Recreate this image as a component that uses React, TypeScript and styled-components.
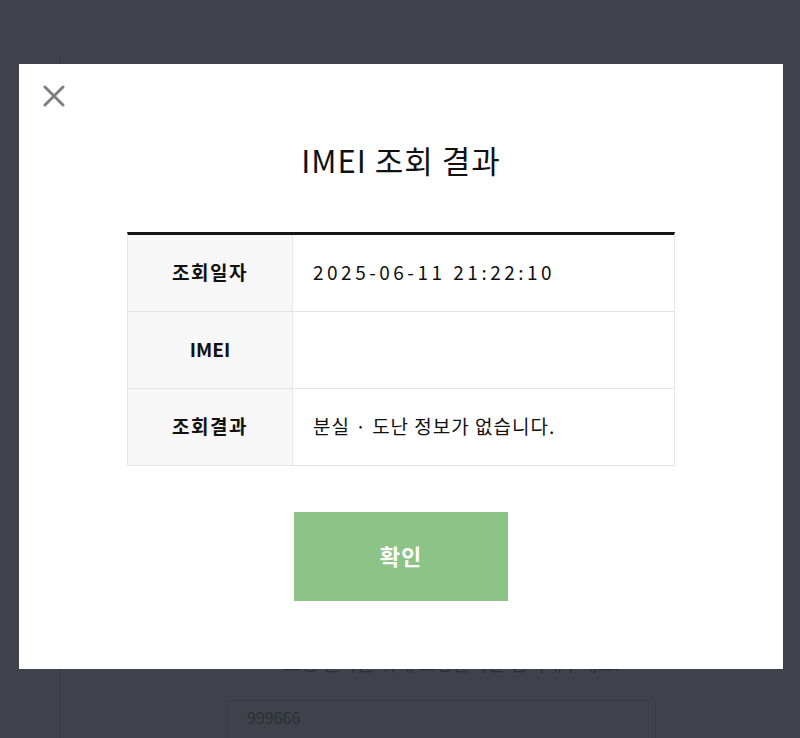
import React from 'react'
import styled, { createGlobalStyle } from 'styled-components'

const GlobalStyle = createGlobalStyle`
  * { box-sizing: border-box; }
  body {
    margin: 0;
    font-family: "Noto Sans CJK KR", "Noto Sans", sans-serif;
    background: #3f424b;
  }
`

const rows = [
  { label: '조회일자', value: '2025-06-11 21:22:10', spacing: 3.5, latin: false },
  { label: 'IMEI', value: '', spacing: 0, latin: true },
  { label: '조회결과', value: '분실 · 도난 정보가 없습니다.', spacing: 1, latin: false },
]

const App = () => (
  <Page>
    <GlobalStyle />
    <Backdrop>
      <TopRule />
      <BackCard>
        <BackText>요청 일자를 위해 요청문자를 입력해주세요.</BackText>
        <BackInput>999666</BackInput>
      </BackCard>
    </Backdrop>
    <Modal role="dialog">
      <CloseButton aria-label="닫기">
        <svg width="22" height="22" viewBox="0 0 22 22">
          <path d="M2 2 L20 20 M20 2 L2 20" stroke="#7f7f7f" strokeWidth="3" strokeLinecap="round" />
        </svg>
      </CloseButton>
      <Title>IMEI 조회 결과</Title>
      <Table>
        {rows.map(r => (
          <Row key={r.label}>
            <Label latin={r.latin}>{r.label}</Label>
            <Value spacing={r.spacing}>{r.value}</Value>
          </Row>
        ))}
      </Table>
      <Confirm>확인</Confirm>
    </Modal>
  </Page>
)

const Page = styled.div`
  position: relative;
  width: 800px;
  height: 738px;
  overflow: hidden;
  background: #3f424b;
`

const Backdrop = styled.div`
  display: flex;
  flex-direction: column;
  padding: 15px 35px 0 35px;
  height: 100%;
`

const TopRule = styled.div`
  height: 1px;
  background: #383b43;
`

const BackCard = styled.div`
  flex: 1;
  margin: 40px 0 0 25px;
  border-left: 1px solid #393c44;
  padding: 594px 0 0 222px;
  display: flex;
  flex-direction: column;
  gap: 24px;
`

const BackText = styled.div`
  color: #2c2f35;
  font-size: 19px;
`

const BackInput = styled.div`
  border: 1px solid #393c44;
  width: 430px;
  height: 60px;
  margin-left: -57px;
  padding: 6px 20px;
  color: #2c2f35;
  font-size: 16px;
  line-height: 20px;
`

const Modal = styled.div`
  position: absolute;
  left: 19px;
  top: 64px;
  width: 764px;
  height: 605px;
  background: #ffffff;
  display: flex;
  flex-direction: column;
  align-items: center;
  padding-top: 77px;
`

const CloseButton = styled.button`
  position: absolute;
  left: 24px;
  top: 21px;
  width: 22px;
  height: 22px;
  padding: 0;
  border: none;
  background: none;
  display: flex;
`

const Title = styled.h2`
  margin: 0;
  font-size: 31px;
  line-height: 38px;
  font-weight: 400;
  letter-spacing: 1px;
  color: #111;
`

const Table = styled.div`
  margin-top: 53px;
  width: 548px;
  border-top: 3px solid #151515;
  border-left: 1px solid #e6e6e6;
  border-right: 1px solid #e6e6e6;
`

const Row = styled.div`
  display: grid;
  grid-template-columns: 165px 1fr;
  height: 77px;
  border-bottom: 1px solid #e3e3e3;
`

const Label = styled.div<{ latin?: boolean }>`
  display: flex;
  align-items: center;
  justify-content: center;
  background: #f7f7f7;
  border-right: 1px solid #e6e6e6;
  font-size: 19px;
  font-weight: 700;
  letter-spacing: ${p => (p.latin ? '0' : '1.5px')};
  color: #111;
  padding-bottom: 4px;
`

const Value = styled.div<{ spacing: number }>`
  display: flex;
  align-items: center;
  padding-left: 20px;
  padding-bottom: 4px;
  font-size: 19px;
  color: #111;
  letter-spacing: ${p => p.spacing}px;
`

const Confirm = styled.button`
  margin-top: 46px;
  width: 214px;
  height: 89px;
  border: none;
  background: #8cc386;
  color: #ffffff;
  font-family: inherit;
  font-size: 22px;
  font-weight: 700;
  letter-spacing: 1px;
  padding-bottom: 4px;
`

export default App
